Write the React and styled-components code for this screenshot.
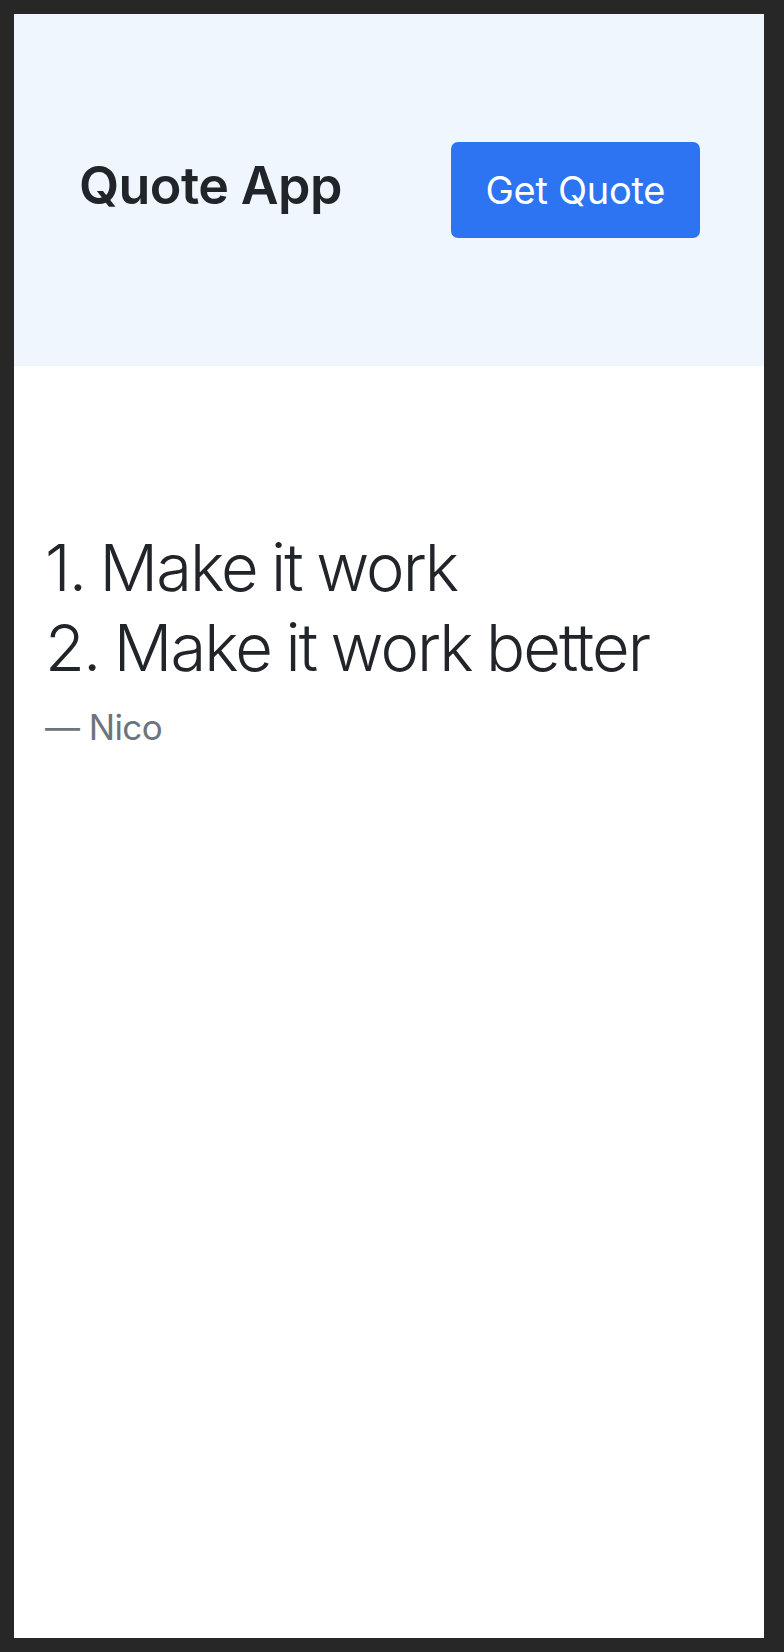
import styled, { createGlobalStyle } from "styled-components";

const Global = createGlobalStyle`
  * { box-sizing: border-box; }
  body {
    margin: 0;
    background-color: #272727;
    font-family: Inter, "Noto Sans", sans-serif;
    color: #212529;
  }
`

export default function App() {
  return (
    <Frame>
      <Global />
      <Page>
        <Topo>
          <Title>Quote App</Title>
          <Botao>Get Quote</Botao>
        </Topo>

        <Citacao>
          <Frase>
            1. Make it work
            <br />
            2. Make it work better
          </Frase>
          <Autor>— Nico</Autor>
        </Citacao>
      </Page>
    </Frame>
  )
}

const Frame = styled.div`
  height: 1652px;
  padding: 14px 20px 14px 14px;
`
const Page = styled.div`
  height: 100%;
  background-color: #ffffff;
  display: flex;
  flex-direction: column;
`
const Topo = styled.header`
  height: 352px;
  padding: 0 64px 0 65px;
  background-color: #eff6fe;
  display: flex;
  flex-direction: row;
  justify-content: space-between;
  align-items: center;
`
const Title = styled.h1`
  margin: 0 0 10px 0;
  font-size: 52px;
  font-weight: 600;
  letter-spacing: -0.6px;
  color: #212529;
`
const Botao = styled.button`
  height: 96px;
  padding: 0 35px;
  border: none;
  border-radius: 7px;
  background-color: #2d74f2;
  color: #ffffff;
  font-family: Inter, "Noto Sans", sans-serif;
  font-size: 38px;
  font-weight: 400;
  letter-spacing: -0.3px;
  display: flex;
  align-items: center;
  justify-content: center;
`
const Citacao = styled.figure`
  margin: 0;
  padding: 162px 30px 0 31px;
`
const Frase = styled.blockquote`
  margin: 0;
  font-size: 65px;
  font-weight: 300;
  line-height: 80px;
  letter-spacing: -1.9px;
  word-spacing: -2px;
  color: #212529;
`
const Autor = styled.figcaption`
  margin-top: 13px;
  font-size: 35px;
  line-height: 52px;
  letter-spacing: -0.6px;
  color: #6c757d;
`
